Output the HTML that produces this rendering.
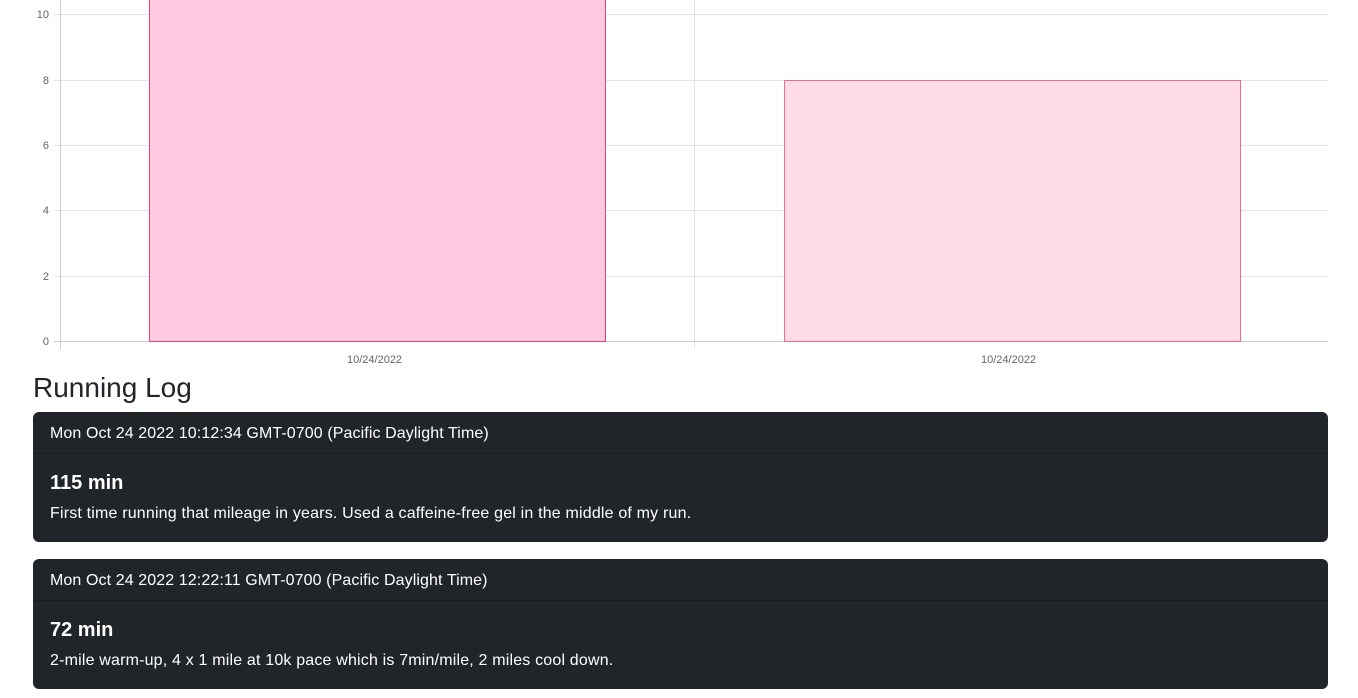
<!DOCTYPE html>
<html><head><style>
body{margin:0;width:1358px;height:698px;overflow:hidden;background:#fff;font-family:"Liberation Sans",sans-serif;position:relative}
.a{position:absolute}
.yl{position:absolute;font-size:11px;color:#666;width:49px;text-align:right;left:0}
.card{position:absolute;left:33px;width:1295px;background:#212529;border-radius:6px;color:#fff}
.hd{height:41px;border-bottom:1px solid #1a1d20;font-size:16px;line-height:44px;padding-left:17px;letter-spacing:0.1px}
.t{font-size:20px;font-weight:bold;padding:17px 0 0 17px;line-height:24px}
.p{font-size:16px;padding:10px 0 0 17px;letter-spacing:0.18px}
</style></head><body>
<svg class="a" style="left:0;top:0" width="1358" height="370">
<g stroke="#e5e5e5" stroke-width="1">
<line x1="54" y1="14.5" x2="1328" y2="14.5"/><line x1="54" y1="80.5" x2="1328" y2="80.5"/>
<line x1="54" y1="145.5" x2="1328" y2="145.5"/><line x1="54" y1="210.5" x2="1328" y2="210.5"/>
<line x1="54" y1="276.5" x2="1328" y2="276.5"/>
<line x1="694.5" y1="0" x2="694.5" y2="349"/>
</g>
<line x1="60.5" y1="0" x2="60.5" y2="349" stroke="#ccc"/>
<line x1="54" y1="341.5" x2="1328" y2="341.5" stroke="#ccc"/>
<rect x="149.5" y="-2" width="456" height="343.5" fill="#ffcadf" stroke="#e8447a"/>
<rect x="784.5" y="80.5" width="456" height="261" fill="#ffdbe6" stroke="#f06a98"/>
</svg>
<div class="yl" style="top:9px">10</div>
<div class="yl" style="top:75px">8</div>
<div class="yl" style="top:140px">6</div>
<div class="yl" style="top:205px">4</div>
<div class="yl" style="top:271px">2</div>
<div class="yl" style="top:336px">0</div>
<div class="a" style="left:347px;top:354px;font-size:11px;color:#666">10/24/2022</div>
<div class="a" style="left:981px;top:354px;font-size:11px;color:#666">10/24/2022</div>
<div class="a" style="left:33px;top:372px;font-size:28px;color:#212529">Running Log</div>
<div class="card" style="top:412px;height:130px"><div class="hd">Mon Oct 24 2022 10:12:34 GMT-0700 (Pacific Daylight Time)</div><div class="t">115 min</div><div class="p">First time running that mileage in years. Used a caffeine-free gel in the middle of my run.</div></div>
<div class="card" style="top:559px;height:130px"><div class="hd">Mon Oct 24 2022 12:22:11 GMT-0700 (Pacific Daylight Time)</div><div class="t">72 min</div><div class="p">2-mile warm-up, 4 x 1 mile at 10k pace which is 7min/mile, 2 miles cool down.</div></div>
</body></html>
